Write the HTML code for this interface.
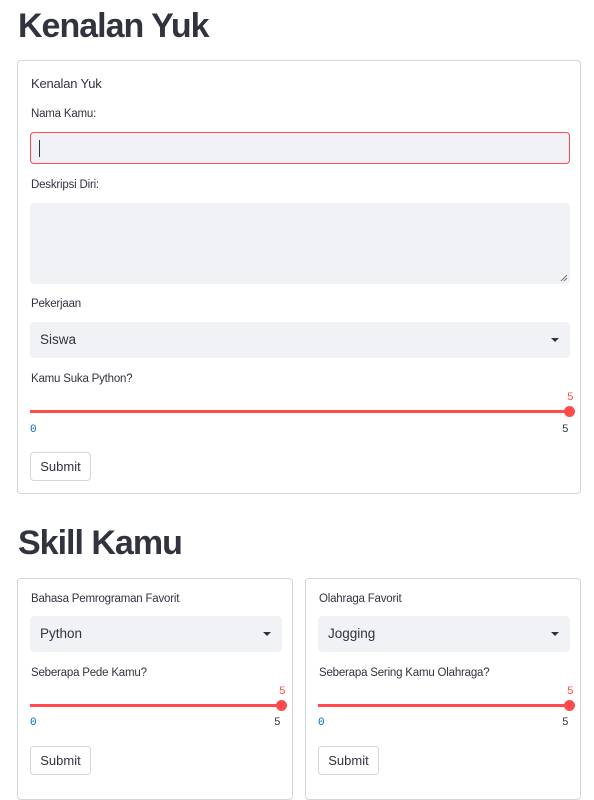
<!DOCTYPE html><html><head><style>
body{margin:0;width:594px;height:785px;overflow:hidden;background:#fff;font-family:"Liberation Sans",sans-serif;color:#31333f;position:relative}
.a{position:absolute}
h1{position:absolute;margin:0;font-size:34px;font-weight:700;left:18px;letter-spacing:-1px}
.box{position:absolute;border:1px solid #d6d6d9;border-radius:4px}
.lbl{position:absolute;font-size:11.5px;color:#31333f;letter-spacing:-0.2px}
.in{position:absolute;background:#f0f2f6;border-radius:4px}
.sel{font-size:13.5px;line-height:36px;padding-left:10px;box-sizing:border-box}
.caret{position:absolute;right:11px;top:16px;width:0;height:0;border-left:4px solid transparent;border-right:4px solid transparent;border-top:4px solid #31333f}
.track{position:absolute;height:3px;background:#ff4b4b}
.thumb{position:absolute;width:11px;height:11px;border-radius:50%;background:#ff4b4b}
.num{position:absolute;font-family:"Liberation Mono",monospace;font-size:11px}
.btn{position:absolute;border:1px solid #d6d6d9;border-radius:4px;background:#fff;font-size:13px;text-align:center;box-sizing:border-box;line-height:27px}
</style></head><body>
<h1 style="top:7px">Kenalan Yuk</h1>
<div class="box" style="left:17px;top:60px;width:562px;height:432px"></div>
<div class="lbl" style="left:31px;top:76px;font-size:13px">Kenalan Yuk</div>
<div class="lbl" style="left:31px;top:108px">Nama Kamu:</div>
<div class="in" style="left:30px;top:132px;width:540px;height:32px;border:1px solid #ff4b4b;box-sizing:border-box"><div class="a" style="left:8px;top:7px;width:1px;height:17px;background:#31333f"></div></div>
<div class="lbl" style="left:31px;top:179px">Deskripsi Diri:</div>
<div class="in" style="left:30px;top:203px;width:540px;height:81px"><svg class="a" style="right:2px;bottom:2px" width="8" height="8"><path d="M1 7L7 1M4 7L7 4" stroke="#777" stroke-width="1"/></svg></div>
<div class="lbl" style="left:31px;top:298px">Pekerjaan</div>
<div class="in sel" style="left:30px;top:322px;width:540px;height:36px">Siswa<div class="caret"></div></div>
<div class="lbl" style="left:31px;top:373px">Kamu Suka Python?</div>
<div class="num" style="left:567px;top:392px;color:#ff4b4b">5</div>
<div class="track" style="left:30px;top:410px;width:538px"></div>
<div class="thumb" style="left:564px;top:406px"></div>
<div class="num" style="left:30px;top:424px;color:#0068c9">0</div>
<div class="num" style="left:562px;top:424px">5</div>
<div class="btn" style="left:30px;top:452px;width:61px;height:29px">Submit</div>

<h1 style="top:524px">Skill Kamu</h1>
<div class="box" style="left:17px;top:578px;width:274px;height:220px"></div>
<div class="box" style="left:305px;top:578px;width:274px;height:220px"></div>

<div class="lbl" style="left:31px;top:593px">Bahasa Pemrograman Favorit</div>
<div class="in sel" style="left:30px;top:616px;width:252px;height:36px">Python<div class="caret"></div></div>
<div class="lbl" style="left:31px;top:667px">Seberapa Pede Kamu?</div>
<div class="num" style="left:279px;top:686px;color:#ff4b4b">5</div>
<div class="track" style="left:30px;top:704px;width:250px"></div>
<div class="thumb" style="left:276px;top:700px"></div>
<div class="num" style="left:30px;top:717px;color:#0068c9">0</div>
<div class="num" style="left:274px;top:717px">5</div>
<div class="btn" style="left:30px;top:746px;width:61px;height:29px">Submit</div>

<div class="lbl" style="left:319px;top:593px">Olahraga Favorit</div>
<div class="in sel" style="left:318px;top:616px;width:252px;height:36px">Jogging<div class="caret"></div></div>
<div class="lbl" style="left:319px;top:667px">Seberapa Sering Kamu Olahraga?</div>
<div class="num" style="left:567px;top:686px;color:#ff4b4b">5</div>
<div class="track" style="left:318px;top:704px;width:250px"></div>
<div class="thumb" style="left:564px;top:700px"></div>
<div class="num" style="left:318px;top:717px;color:#0068c9">0</div>
<div class="num" style="left:562px;top:717px">5</div>
<div class="btn" style="left:318px;top:746px;width:61px;height:29px">Submit</div>
</body></html>
